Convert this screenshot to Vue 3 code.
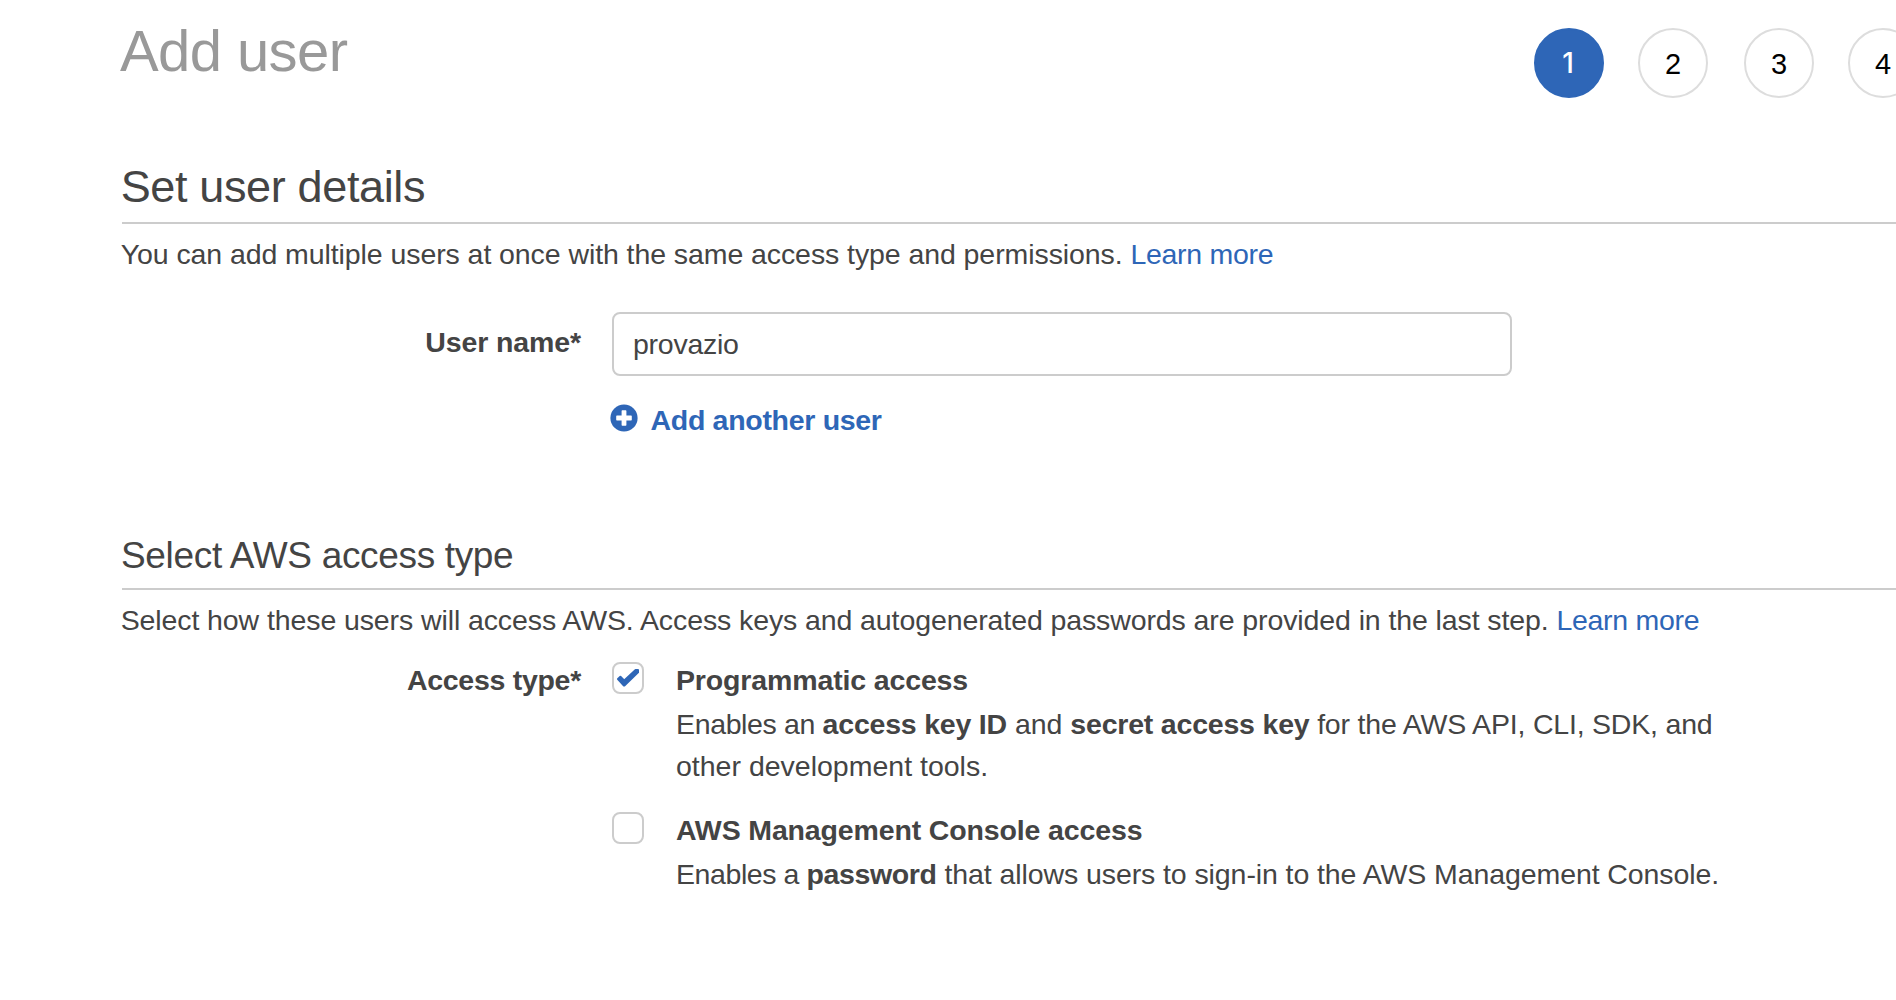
<script setup>
import { ref } from 'vue'

const steps = [1, 2, 3, 4]
const current = ref(1)
const userName = ref('provazio')
const programmatic = ref(true)
const consoleAccess = ref(false)
</script>

<template>
  <main class="page">
    <header class="header">
      <h1 class="title">Add user</h1>
      <ol class="steps">
        <li v-for="n in steps" :key="n" class="step" :class="{ active: n === current }">{{ n }}</li>
      </ol>
    </header>

    <section class="details">
      <h2 class="heading">Set user details</h2>
      <p class="intro">
        <span class="intro-a">You can add multiple users at once with the same access type and permissions. </span><a class="link">Learn more</a>
      </p>
      <div class="row">
        <label class="label label-name" for="user-name">User name*</label>
        <div class="field">
          <input id="user-name" v-model="userName" class="input" type="text" />
          <a class="add">
            <svg class="plus" viewBox="0 0 28 28" width="28" height="28" aria-hidden="true">
              <circle cx="14" cy="14" r="13.6" fill="#2e66b7" />
              <path d="M12.3 6.2h3.4a.7.7 0 0 1 .7.7v4.7h4.7a.7.7 0 0 1 .7.7v3.4a.7.7 0 0 1-.7.7h-4.7v4.7a.7.7 0 0 1-.7.7h-3.4a.7.7 0 0 1-.7-.7v-4.7H6.9a.7.7 0 0 1-.7-.7v-3.4a.7.7 0 0 1 .7-.7h4.7V6.9a.7.7 0 0 1 .7-.7z" fill="#fff" />
            </svg>
            <span>Add another user</span>
          </a>
        </div>
      </div>
    </section>

    <section class="access">
      <h3 class="subheading">Select AWS access type</h3>
      <p class="intro">
        <span class="intro-b">Select how these users will access AWS. Access keys and autogenerated passwords are provided in the last step. </span><a class="link">Learn more</a>
      </p>
      <div class="row access-row">
        <span class="label label-type">Access type*</span>
        <div class="options">
          <div class="option">
            <button class="box" type="button" role="checkbox" :aria-checked="programmatic" @click="programmatic = !programmatic">
              <svg v-if="programmatic" viewBox="0 0 24 20" width="24" height="20" aria-hidden="true">
                <path d="M2 11 4.4 8.7 8.3 12.6 19.6 2H22V4.4L8.4 17.6H7.9z" fill="#2e66b7" stroke="#2e66b7" stroke-width="2" stroke-linejoin="round" />
              </svg>
            </button>
            <div class="text">
              <div class="name">Programmatic access</div>
              <div class="desc"><span class="t3">Enables an </span><b>access key ID</b><span> and </span><b>secret access key</b><span class="t2"> for the AWS API, CLI, SDK, and</span><br />other development tools.</div>
            </div>
          </div>
          <div class="option">
            <button class="box" type="button" role="checkbox" :aria-checked="consoleAccess" @click="consoleAccess = !consoleAccess"></button>
            <div class="text">
              <div class="name">AWS Management Console access</div>
              <div class="desc"><span class="t4">Enables a </span><b class="t3">password</b><span class="t08"> that allows users to sign-in to the AWS Management Console.</span></div>
            </div>
          </div>
        </div>
      </div>
    </section>
  </main>
</template>

<style>
body {
  margin: 0;
  background: #fff;
}
</style>

<style scoped>
.page {
  box-sizing: border-box;
  height: 1000px;
  padding-left: 120px;
  overflow: hidden;
  color: #444;
  font-family: "Liberation Sans", "Helvetica Neue", Arial, sans-serif;
  font-size: 28.5px;
  line-height: 42px;
  white-space: nowrap;
}
h1, h2, h3, p, ol {
  margin: 0;
  padding: 0;
  font-weight: 400;
}
.header {
  display: flex;
  height: 161px;
}
.title {
  flex: 0 0 1414px;
  margin-top: 21px;
  color: #999;
  font-size: 58px;
  line-height: 60px;
  letter-spacing: -0.6px;
}
.steps {
  display: flex;
  gap: 34px;
  margin-top: 28px;
  list-style: none;
}
.step {
  box-sizing: border-box;
  flex: 0 0 70px;
  height: 70px;
  border: 2px solid #ddd;
  border-radius: 50%;
  color: #000;
  font-size: 29px;
  line-height: 69px;
  text-align: center;
}
.step:nth-child(3) {
  margin-left: 2px;
}
.step.active {
  border-color: #2e66b7;
  background: #2e66b7;
  color: #fff;
  font-family: Inter, "Liberation Sans", sans-serif;
  font-size: 28px;
  font-weight: 500;
  line-height: 67px;
  text-indent: -2px;
}
.heading {
  box-sizing: border-box;
  height: 63px;
  margin-left: 2px;
  padding-top: 1px;
  border-bottom: 2px solid #ccc;
  font-size: 45px;
  line-height: 50px;
  letter-spacing: -0.36px;
  text-indent: -1.3px;
}
.subheading {
  box-sizing: border-box;
  height: 56px;
  margin-left: 2px;
  padding-top: 1px;
  border-bottom: 2px solid #ccc;
  font-size: 37px;
  line-height: 42px;
  letter-spacing: -0.33px;
  text-indent: -1px;
}
.intro {
  margin: 9px 0 0 0.7px;
}
.intro-a, .intro-b {
  white-space: pre;
}
.intro-a {
  letter-spacing: -0.08px;
}
.intro-b {
  letter-spacing: -0.1px;
}
.link {
  color: #2e66b7;
  letter-spacing: -0.3px;
}
.row {
  display: grid;
  grid-template-columns: 461px 1fr;
  column-gap: 31px;
  margin-top: 37px;
}
.label {
  font-weight: 700;
  text-align: right;
}
.label-name {
  padding-top: 9px;
  letter-spacing: -0.12px;
}
.label-type {
  letter-spacing: -0.28px;
}
.input {
  display: block;
  box-sizing: border-box;
  width: 900px;
  height: 64px;
  padding: 0 19px;
  border: 2px solid #ccc;
  border-radius: 8px;
  outline: none;
  background: #fff;
  color: #444;
  font: inherit;
  letter-spacing: -0.25px;
}
.add {
  display: flex;
  align-items: flex-start;
  gap: 12.5px;
  margin: 23px 0 0 -2px;
  color: #2e66b7;
  font-weight: 700;
  letter-spacing: -0.3px;
}
.plus {
  margin-top: 5px;
}
.access {
  margin-top: 93px;
}
.access-row {
  margin-top: 18px;
}
.option {
  display: flex;
  gap: 32px;
}
.option + .option {
  margin-top: 22px;
}
.box {
  display: flex;
  align-items: center;
  justify-content: center;
  box-sizing: border-box;
  width: 32px;
  height: 32px;
  margin: 3px 0 0;
  padding: 0;
  border: 2px solid #ccc;
  border-radius: 8px;
  background: #fff;
}
.name {
  font-weight: 700;
  letter-spacing: -0.14px;
}
.desc {
  margin-top: 2px;
}
.desc span {
  white-space: pre;
}
.desc b {
  letter-spacing: -0.2px;
}
.desc .t08 {
  letter-spacing: -0.09px;
}
.desc .t2 {
  letter-spacing: -0.2px;
}
.desc .t3 {
  letter-spacing: -0.36px;
}
.desc .t4 {
  letter-spacing: -0.42px;
}
</style>
